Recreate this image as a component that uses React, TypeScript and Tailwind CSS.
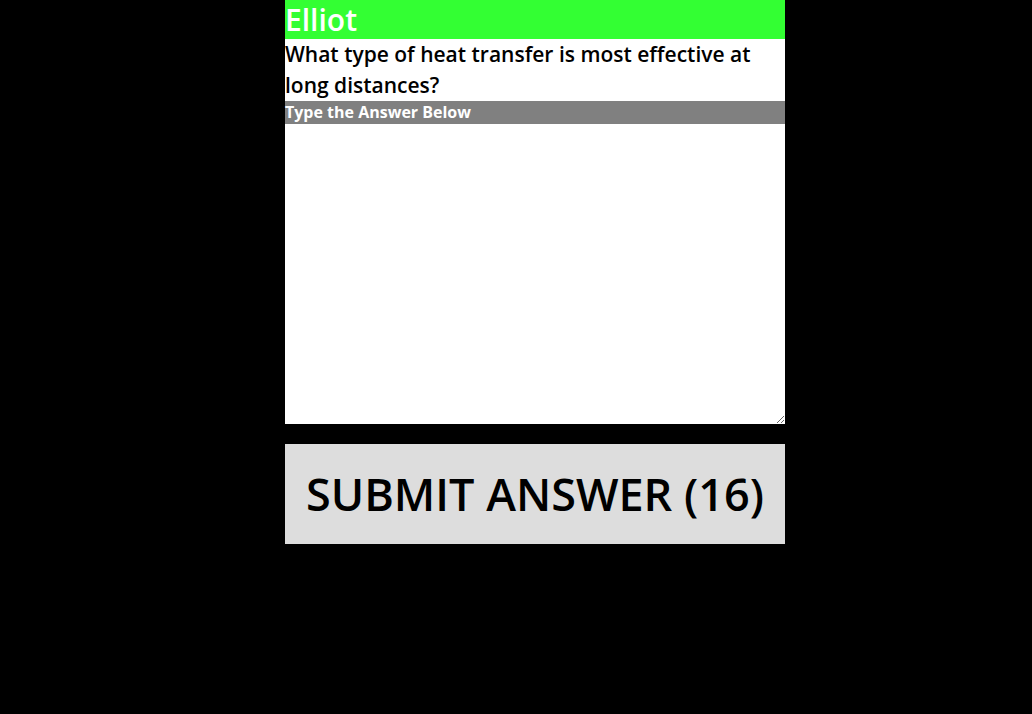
export default function App() {
  return (
    <div className="min-h-[714px] w-full bg-black font-['Open_Sans',sans-serif]">
      <div className="ml-[285px] flex w-[500px] flex-col">
        <div className="h-[39px] bg-[#33ff33] text-[30px] font-semibold leading-[39px] text-white">
          Elliot
        </div>
        <div className="bg-white text-[21px] font-semibold leading-[31px] text-black">
          What type of heat transfer is most effective at long distances?
        </div>
        <div className="h-[23px] bg-[#808080] text-[16px] font-bold leading-[23px] text-white">
          Type the Answer Below
        </div>
        <textarea className="block h-[300px] w-full resize-y bg-white outline-none" />
        <button
          type="button"
          className="mt-5 h-[100px] w-full bg-[#dddddd] text-[45px] font-semibold text-black"
        >
          SUBMIT ANSWER (16)
        </button>
      </div>
    </div>
  );
}
